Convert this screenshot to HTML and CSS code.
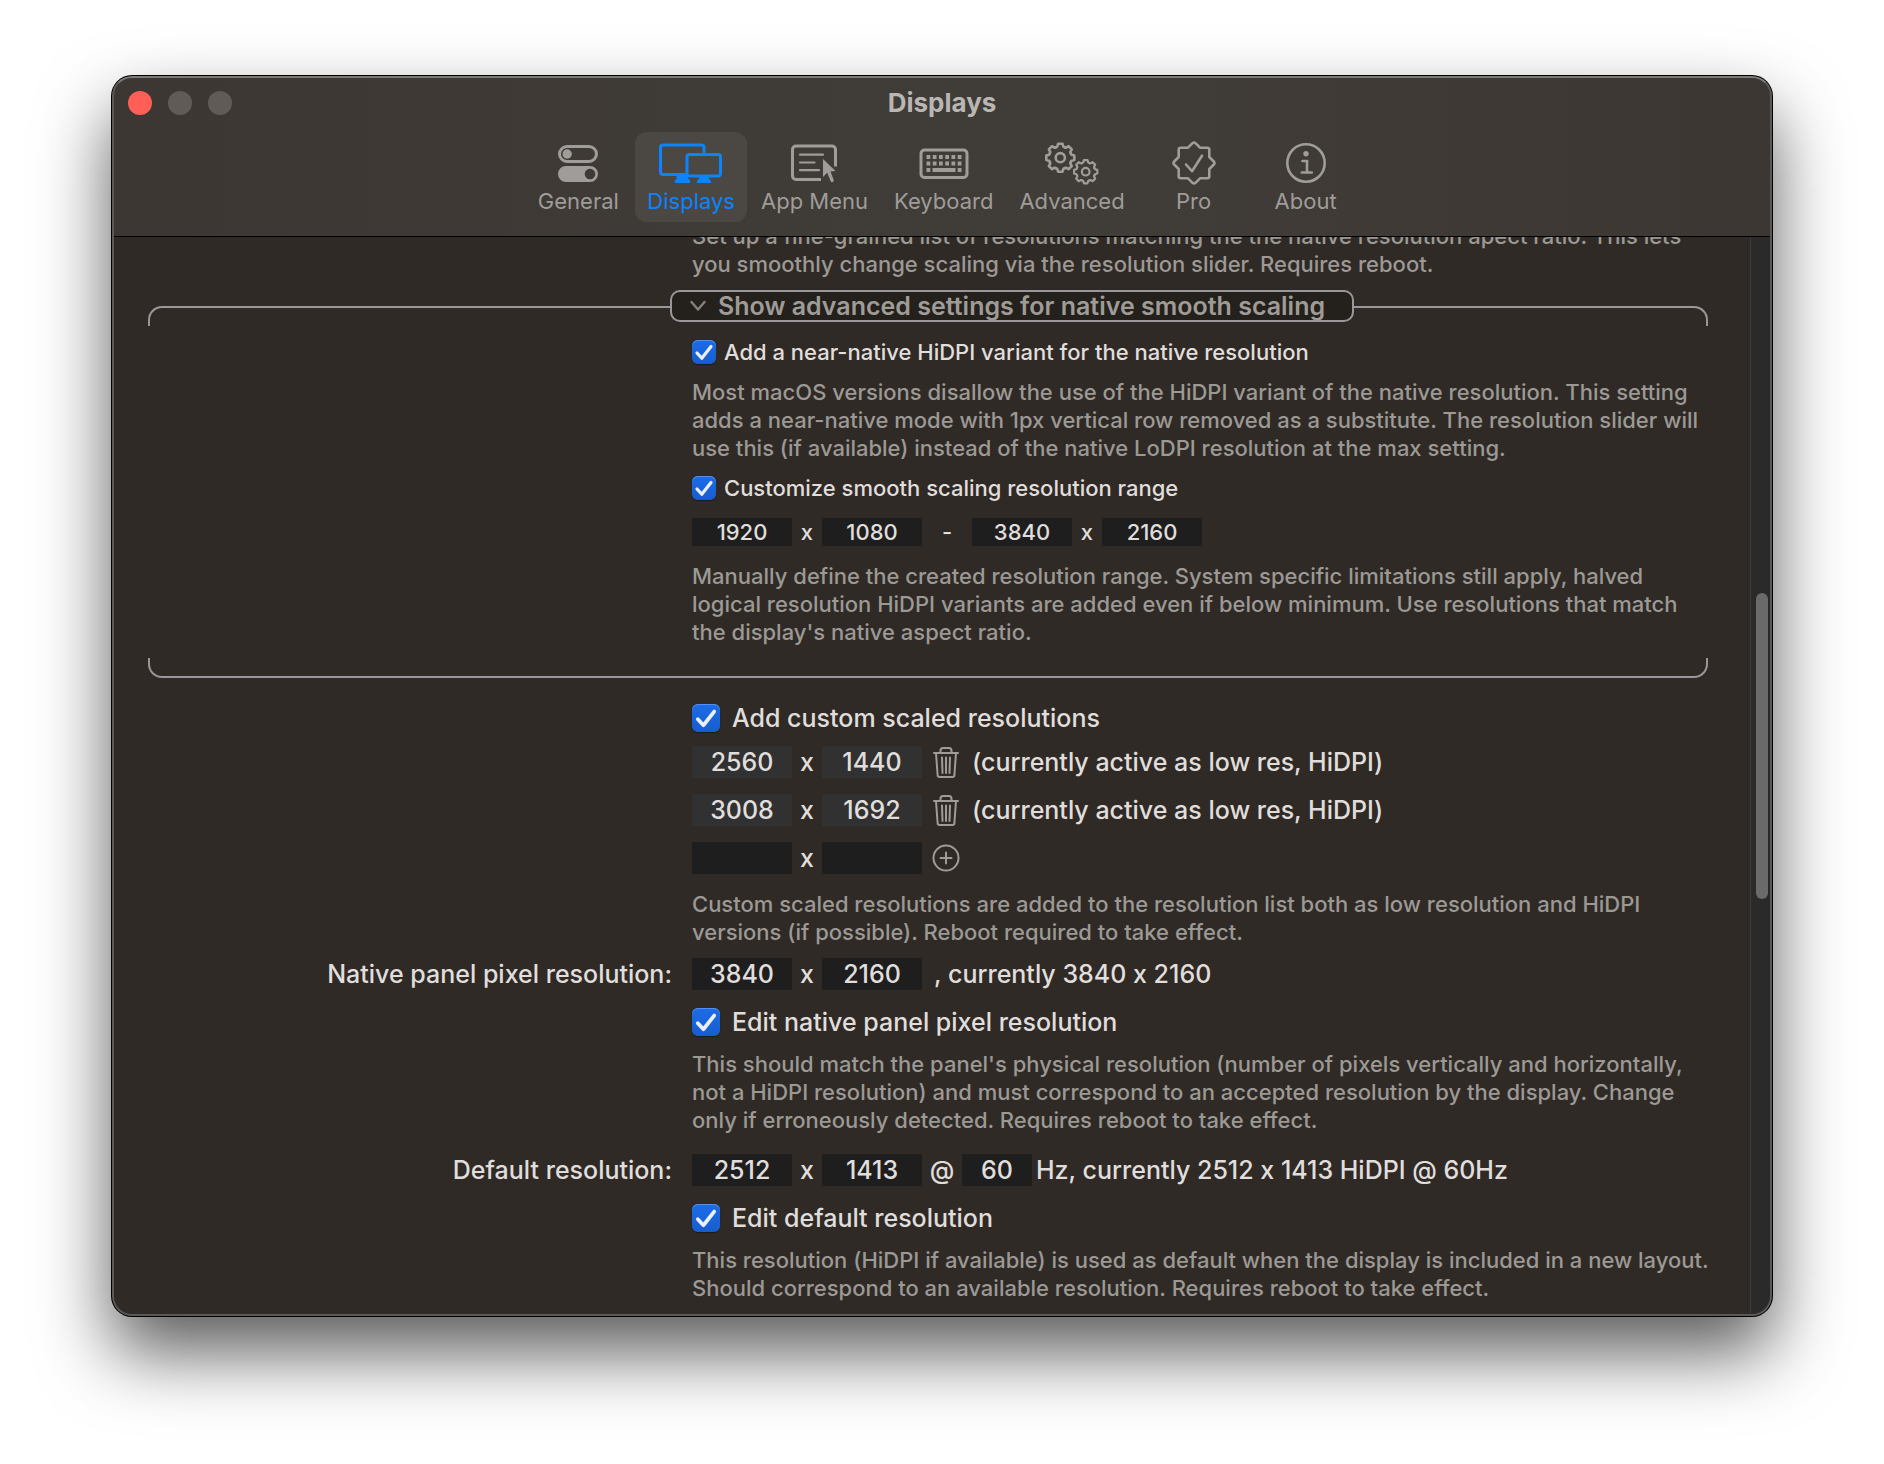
FILE: index.html
```html
<!DOCTYPE html>
<html lang="en">
<head>
    <meta charset="UTF-8">
    <meta name="viewport" content="width=device-width, initial-scale=1.0">
    <title>Displays</title>
    <link rel="stylesheet" href="styles.css">
</head>
<body>
    <!-- Shared shapes -->
    <svg class="defs" aria-hidden="true">
        <symbol id="tick" viewBox="0 0 24 24">
            <path d="M5 13l4.800 5.200L19 6.500" fill="none" stroke="currentColor" stroke-width="3.200" stroke-linecap="round" stroke-linejoin="round"/>
        </symbol>
        <symbol id="trash" viewBox="0 0 28 32">
            <g fill="none" stroke="currentColor" stroke-width="2" stroke-linecap="round" stroke-linejoin="round">
                <path d="M2 7h24M8.500 7V4.500a2.500 2.500 0 0 1 2.500-2.500h6a2.500 2.500 0 0 1 2.500 2.500V7M4 7l1.600 22a2 2 0 0 0 2 2h12.800a2 2 0 0 0 2-2L24 7"/>
                <path d="M10 11.500l.5 15.500M14 11.500V27M18 11.500l-.5 15.500"/>
            </g>
        </symbol>
        <g id="tooth"><path d="M-4.500-10.400L-3-11.200-2.200-14H2.200L3-11.200 4.500-10.400"/></g>
        <g id="gear" fill="none" stroke="currentColor" stroke-width="2.600" stroke-linejoin="round" stroke-linecap="round">
            <use href="#tooth"/>
            <use href="#tooth" transform="rotate(45)"/>
            <use href="#tooth" transform="rotate(90)"/>
            <use href="#tooth" transform="rotate(135)"/>
            <use href="#tooth" transform="rotate(180)"/>
            <use href="#tooth" transform="rotate(225)"/>
            <use href="#tooth" transform="rotate(270)"/>
            <use href="#tooth" transform="rotate(315)"/>
            <circle r="4.600"/>
        </g>
    </svg>

    <main class="window">
        <header class="toolbar">
            <div class="titlebar">
                <div class="lights">
                    <button class="light close" type="button" aria-label="Close"></button>
                    <button class="light" type="button" aria-label="Minimize"></button>
                    <button class="light" type="button" aria-label="Zoom"></button>
                </div>
                <h1>Displays</h1>
            </div>
            <nav class="tabs">
                <button class="tab" type="button">
                    <svg width="40" height="44" viewBox="0 0 40 44">
                        <rect x="1.500" y="5.500" width="37" height="15" rx="7.500" fill="none" stroke="currentColor" stroke-width="3"/>
                        <circle cx="9.200" cy="13" r="4.700" fill="currentColor"/>
                        <path fill="currentColor" fill-rule="evenodd" d="M8 25h24a8 8 0 0 1 0 16H8a8 8 0 0 1 0-16zM32 27.700a5.300 5.300 0 1 0 0 10.600a5.300 5.300 0 0 0 0-10.600z"/>
                    </svg>
                    <span>General</span>
                </button>
                <button class="tab active" type="button">
                    <svg width="64" height="44" viewBox="0 0 64 44">
                        <g fill="none" stroke="currentColor" stroke-width="3">
                            <path d="M28 33.500H4a2.500 2.500 0 0 1-2.500-2.500V6.500A2.500 2.500 0 0 1 4 4h38.500A2.500 2.500 0 0 1 45 6.500V13"/>
                            <rect x="28" y="13.500" width="33.500" height="21.500" rx="2.500"/>
                        </g>
                        <path fill="currentColor" d="M17.500 34H29v3l2 2.500c.8 1.200.3 2.500-1 2.500H17c-1.300 0-1.800-1.300-1-2.500l1.500-1.500zM40 36h10v2l2 2c.5 1 0 2-1 2H39c-1 0-1.500-1-1-2l2-2z"/>
                    </svg>
                    <span>Displays</span>
                </button>
                <button class="tab" type="button">
                    <svg width="48" height="44" viewBox="0 0 48 44">
                        <path d="M31 38.500H6A3.500 3.500 0 0 1 2.500 35V8.500A3.500 3.500 0 0 1 6 5h36a3.500 3.500 0 0 1 3.500 3.500V25.500" fill="none" stroke="currentColor" stroke-width="3"/>
                        <path d="M10 13.700h23M10 21.500h14.500M10 29.200h19" fill="none" stroke="currentColor" stroke-width="2.200" stroke-linecap="round"/>
                        <path d="M33 18l12.500 12-5 .5 3.300 8.800c.4 1.600-2.300 2.700-3.100 1l-3.500-8.600L33 36z" fill="currentColor"/>
                    </svg>
                    <span>App Menu</span>
                </button>
                <button class="tab" type="button">
                    <svg width="50" height="44" viewBox="0 0 50 44">
                        <rect x="2" y="9" width="46" height="27.500" rx="3.500" fill="none" stroke="currentColor" stroke-width="3"/>
                        <g stroke="currentColor" stroke-width="3.800" fill="none">
                            <path d="M7.500 16h35M7.500 22.500h35" stroke-dasharray="3.800 2.440"/>
                            <path d="M7.500 29h3.800M13.500 29h23M38.700 29h3.800"/>
                        </g>
                    </svg>
                    <span>Keyboard</span>
                </button>
                <button class="tab" type="button">
                    <svg width="54" height="44" viewBox="0 0 54 44">
                        <use href="#gear" transform="translate(15.300 16.700)"/>
                        <use href="#gear" transform="translate(40.700 30.700) scale(.83)"/>
                    </svg>
                    <span>Advanced</span>
                </button>
                <button class="tab" type="button">
                    <svg width="44" height="44" viewBox="0 0 44 44">
                        <g fill="none" stroke="currentColor" stroke-width="2.600" stroke-linejoin="round" stroke-linecap="round">
                            <path d="M20.500 2.200q1.500-1.400 3 0L28 6.700h7.300q2 0 2 2V16l4.500 4.500q1.400 1.500 0 3L37.300 28v7.300q0 2-2 2H28l-4.500 4.500q-1.500 1.400-3 0L16 37.300H8.700q-2 0-2-2V28l-4.500-4.500q-1.400-1.500 0-3L6.700 16V8.700q0-2 2-2H16z"/>
                            <path d="M14 23.500l6 6.700 10-15.500"/>
                        </g>
                    </svg>
                    <span>Pro</span>
                </button>
                <button class="tab" type="button">
                    <svg width="40" height="44" viewBox="0 0 40 44">
                        <circle cx="20" cy="22" r="18.700" fill="none" stroke="currentColor" stroke-width="2.600"/>
                        <circle cx="20" cy="12.700" r="2.700" fill="currentColor"/>
                        <path d="M16.500 20H21v11.500M15.800 31.500h10" fill="none" stroke="currentColor" stroke-width="2.600" stroke-linecap="round"/>
                    </svg>
                    <span>About</span>
                </button>
            </nav>
        </header>

        <div class="body">
            <form class="settings">
                <p class="help cut">Set up a fine-grained list of resolutions matching the the native resolution apect ratio. This lets<br>you smoothly change scaling via the resolution slider. Requires reboot.</p>

                <div class="group-head">
                    <div class="edge edge-left"></div>
                    <button class="disclosure" type="button" aria-expanded="true">
                        <svg width="16" height="12" viewBox="0 0 16 12"><path d="M1.500 2L8 9.500 14.500 2" fill="none" stroke="currentColor" stroke-width="2.400" stroke-linecap="round" stroke-linejoin="round"/></svg>
                        <span>Show advanced settings for native smooth scaling</span>
                    </button>
                    <div class="edge edge-right"></div>
                </div>

                <label class="check small">
                    <span class="box"><input type="checkbox" checked><svg><use href="#tick"/></svg></span>
                    Add a near-native HiDPI variant for the native resolution
                </label>
                <p class="help">Most macOS versions disallow the use of the HiDPI variant of the native resolution. This setting<br>adds a near-native mode with 1px vertical row removed as a substitute. The resolution slider will<br>use this (if available) instead of the native LoDPI resolution at the max setting.</p>

                <label class="check small">
                    <span class="box"><input type="checkbox" checked><svg><use href="#tick"/></svg></span>
                    Customize smooth scaling resolution range
                </label>
                <div class="row small">
                    <input type="text" value="1920" aria-label="Minimum width">
                    <span class="sep">x</span>
                    <input type="text" value="1080" aria-label="Minimum height">
                    <span class="sep dash">-</span>
                    <input type="text" value="3840" aria-label="Maximum width">
                    <span class="sep">x</span>
                    <input type="text" value="2160" aria-label="Maximum height">
                </div>
                <p class="help">Manually define the created resolution range. System specific limitations still apply, halved<br>logical resolution HiDPI variants are added even if below minimum. Use resolutions that match<br>the display's native aspect ratio.</p>
                <div class="group-foot"></div>

                <label class="check">
                    <span class="box"><input type="checkbox" checked><svg><use href="#tick"/></svg></span>
                    Add custom scaled resolutions
                </label>
                <div class="custom">
                    <div class="row">
                        <input type="text" class="saved" value="2560" readonly aria-label="Width">
                        <span class="sep">x</span>
                        <input type="text" class="saved" value="1440" readonly aria-label="Height">
                        <button class="icon" type="button" aria-label="Remove"><svg width="28" height="32"><use href="#trash"/></svg></button>
                        <span>(currently active as low res, HiDPI)</span>
                    </div>
                    <div class="row">
                        <input type="text" class="saved" value="3008" readonly aria-label="Width">
                        <span class="sep">x</span>
                        <input type="text" class="saved" value="1692" readonly aria-label="Height">
                        <button class="icon" type="button" aria-label="Remove"><svg width="28" height="32"><use href="#trash"/></svg></button>
                        <span>(currently active as low res, HiDPI)</span>
                    </div>
                    <div class="row">
                        <input type="text" aria-label="New width">
                        <span class="sep">x</span>
                        <input type="text" aria-label="New height">
                        <button class="icon" type="button" aria-label="Add">
                            <svg width="28" height="32" viewBox="0 0 28 32"><g fill="none" stroke="currentColor" stroke-width="2" stroke-linecap="round"><circle cx="14" cy="16" r="12.500"/><path d="M8.500 16h11M14 10.500v11"/></g></svg>
                        </button>
                    </div>
                </div>
                <p class="help tight">Custom scaled resolutions are added to the resolution list both as low resolution and HiDPI<br>versions (if possible). Reboot required to take effect.</p>

                <label class="name" for="nativeWidth">Native panel pixel resolution:</label>
                <div class="row">
                    <input type="text" id="nativeWidth" value="3840">
                    <span class="sep">x</span>
                    <input type="text" value="2160" aria-label="Native height">
                    <span class="after">, currently 3840 x 2160</span>
                </div>
                <label class="check">
                    <span class="box"><input type="checkbox" checked><svg><use href="#tick"/></svg></span>
                    Edit native panel pixel resolution
                </label>
                <p class="help loose">This should match the panel's physical resolution (number of pixels vertically and horizontally,<br>not a HiDPI resolution) and must correspond to an accepted resolution by the display. Change<br>only if erroneously detected. Requires reboot to take effect.</p>

                <label class="name" for="defaultWidth">Default resolution:</label>
                <div class="row">
                    <input type="text" id="defaultWidth" value="2512">
                    <span class="sep">x</span>
                    <input type="text" value="1413" aria-label="Default height">
                    <span class="sep at">@</span>
                    <input type="text" class="rate" value="60" aria-label="Refresh rate">
                    <span class="unit">Hz, currently 2512 x 1413 HiDPI @ 60Hz</span>
                </div>
                <label class="check">
                    <span class="box"><input type="checkbox" checked><svg><use href="#tick"/></svg></span>
                    Edit default resolution
                </label>
                <p class="help">This resolution (HiDPI if available) is used as default when the display is included in a new layout.<br>Should correspond to an available resolution. Requires reboot to take effect.</p>
            </form>
            <div class="scrollbar"><div class="thumb"></div></div>
        </div>
    </main>
</body>
</html>
```

FILE: styles.css
```css
* {
    box-sizing: border-box;
}
body {
    margin: 0;
    padding: 76px 112px 148px;
    background-color: #fff;
    font-family: Inter, "Liberation Sans", sans-serif;
    font-size: 25px;
    font-weight: 500;
    font-feature-settings: "calt" 0;
    line-height: 32px;
    color: #e0dedc;
    overflow-x: hidden;
}
button, input {
    font: inherit;
    font-feature-settings: inherit;
    color: inherit;
    border: none;
    padding: 0;
    margin: 0;
    background: none;
}
h1, p {
    margin: 0;
}
svg {
    display: block;
}
.defs {
    position: absolute;
    width: 0;
    height: 0;
}

/* Window */
.window {
    position: relative;
    border-radius: 20px;
    background-color: #2f2a25;
    overflow: hidden;
    box-shadow: 0 0 0 1px #000, 0 36px 72px rgba(0, 0, 0, 0.65);
}
.window::after {
    content: "";
    position: absolute;
    inset: 0;
    border: 2px solid #5c5856;
    border-top-color: #7d7a75;
    border-radius: 20px;
    pointer-events: none;
}

/* Toolbar */
.toolbar {
    padding: 11px 16px 14px;
    background: linear-gradient(90deg, #3d3733, #3f3b36 40%, #403c37 60%, #3d3733);
    border-bottom: 1px solid #000;
}
.titlebar {
    display: grid;
    grid-template-columns: 1fr auto 1fr;
    align-items: center;
    height: 32px;
    margin-bottom: 13px;
}
.titlebar h1 {
    font-size: 26px;
    font-weight: 700;
    color: #b9b6b3;
}
.lights {
    display: flex;
    gap: 16px;
}
.light {
    width: 24px;
    height: 24px;
    border-radius: 50%;
    background-color: #605b57;
}
.light.close {
    background-color: #ff5f57;
}
.tabs {
    display: flex;
    justify-content: center;
    gap: 2px;
}
.tab {
    display: flex;
    flex-direction: column;
    align-items: center;
    min-width: 110px;
    height: 90px;
    padding: 9px 12px 0;
    border-radius: 12px;
    font-size: 22px;
    font-weight: 400;
    line-height: 32px;
    color: #9f9c99;
}
.tab.active {
    background-color: #4b4743;
    color: #0a84ff;
}

/* Settings */
.body {
    display: grid;
    grid-template-columns: 1fr 22px;
}
.settings {
    display: grid;
    grid-template-columns: 524fr 1016fr;
    column-gap: 20px;
    padding: 0 42px 14px 36px;
    white-space: nowrap;
    overflow: hidden;
}
.help, .check, .row, .custom {
    grid-column: 2;
    min-width: 0;
}
.help {
    font-size: 22px;
    line-height: 28px;
    color: #9c9995;
    margin: 14px 0;
}
.help.cut {
    margin: -15px 0 12px;
}
.help.tight {
    margin-bottom: 12px;
}
.help.loose {
    margin-bottom: 20px;
}
.settings .help:last-child {
    margin-bottom: 0;
}
.group-head {
    grid-column: 1 / -1;
    display: grid;
    grid-template-columns: 522fr 684fr 354fr;
    align-items: start;
    margin-bottom: 14px;
}
.edge {
    height: 20px;
    margin-top: 16px;
    border-top: 2px solid #9a979a;
}
.edge-left {
    border-left: 2px solid #9a979a;
    border-top-left-radius: 14px;
}
.edge-right {
    border-right: 2px solid #9a979a;
    border-top-right-radius: 14px;
}
.disclosure {
    display: flex;
    align-items: center;
    gap: 12px;
    height: 32px;
    padding: 0 18px;
    border: 2px solid #9a979a;
    border-radius: 10px;
    background-color: #24201b;
    font-weight: 600;
    color: #9f9c98;
}
.disclosure svg {
    color: #85827e;
}
.group-foot {
    grid-column: 1 / -1;
    height: 20px;
    margin: -2px 0 26px;
    border: 2px solid #9a979a;
    border-top: none;
    border-radius: 0 0 14px 14px;
}
.check {
    display: flex;
    align-items: center;
    gap: 12px;
    height: 28px;
}
.check.small {
    gap: 8px;
    height: 24px;
    font-size: 22px;
}
.box {
    display: grid;
    width: 28px;
    height: 28px;
}
.check.small .box {
    width: 24px;
    height: 24px;
}
.box input, .box svg {
    grid-area: 1 / 1;
    width: 100%;
    height: 100%;
}
.box input {
    appearance: none;
    border-radius: 6px;
    background: linear-gradient(#1b6cea, #185dcb);
    box-shadow: inset 0 1px 0 #5590ee, 0 1px 1px rgba(0, 0, 0, 0.4);
}
.box svg {
    color: #e9effc;
    pointer-events: none;
}
.row {
    display: flex;
    align-items: center;
}
.row input {
    width: 100px;
    height: 32px;
    text-align: center;
    background-color: #1e1e1e;
}
.row.small {
    margin-top: 18px;
    margin-bottom: 2px;
    font-size: 22px;
    line-height: 28px;
}
.row.small input {
    height: 28px;
}
.row input.saved {
    background-color: #313131;
}
.row input.rate {
    width: 70px;
}
.sep {
    width: 30px;
    text-align: center;
}
.sep.dash {
    width: 50px;
}
.sep.at {
    width: 40px;
}
.after {
    margin-left: 12px;
}
.unit {
    margin-left: 4px;
}
.custom {
    display: flex;
    flex-direction: column;
    gap: 16px;
    margin: 14px 0 2px;
}
.icon {
    margin: 0 12px 0 10px;
    color: #9f9c98;
}
.name {
    text-align: right;
    line-height: 32px;
}
.row + .check {
    margin-top: 18px;
}

/* Scrollbar */
.scrollbar {
    display: flex;
    flex-direction: column;
    align-items: center;
    background-color: #2a2a2a;
    border-left: 1px solid #3d3d3c;
}
.scrollbar::before {
    content: "";
    flex: 356;
}
.scrollbar::after {
    content: "";
    flex: 417;
}
.thumb {
    flex: 306;
    width: 12px;
    border-radius: 6px;
    background-color: #6a6a6a;
}
```
